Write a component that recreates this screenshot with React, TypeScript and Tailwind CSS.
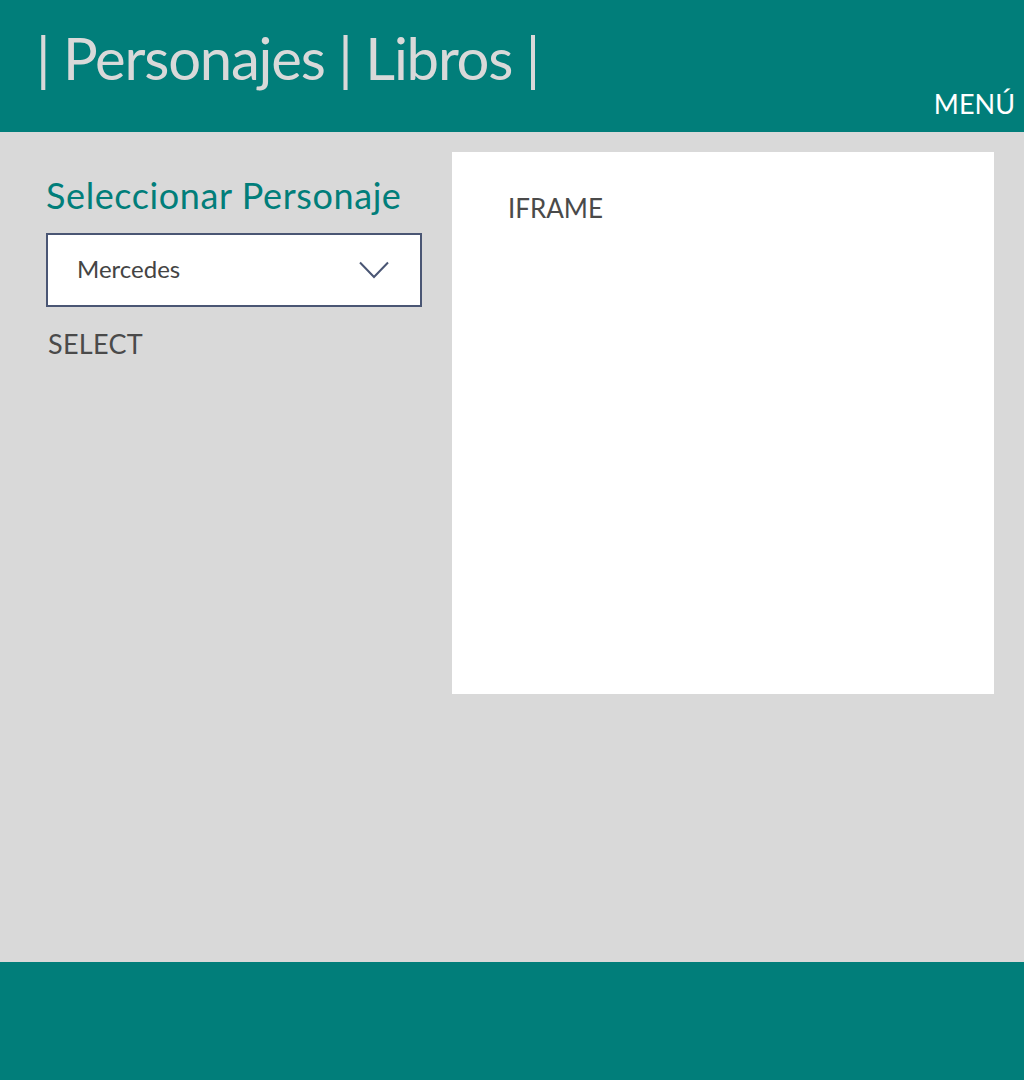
import React from "react";

export default function App() {
  return (
    <div className="flex h-[1080px] w-[1024px] flex-col bg-[#d9d9d9]" style={{ fontFamily: "Lato, 'Open Sans', sans-serif" }}>
      <header className="relative h-[132px] shrink-0 bg-[#017e7a]">
        <h1 className="absolute left-[36px] top-[22px] text-[58px] leading-[72px] font-normal tracking-[-1.2px] text-[#d9d9d9] whitespace-nowrap">
          | Personajes | Libros |
        </h1>
        <div className="absolute right-[9px] top-[86px] text-[27px] leading-[36px] text-white">MENÚ</div>
      </header>
      <main className="flex flex-1 gap-[30px] pl-[46px] pr-[30px] pt-[20px]">
        <div className="w-[376px] shrink-0 pt-[21px]">
          <h2 className="text-[36px] leading-[44px] tracking-[0.6px] text-[#017e7a] whitespace-nowrap">Seleccionar Personaje</h2>
          <div className="mt-[16px] flex h-[74px] items-center justify-between border-2 border-[#4a5674] bg-white pl-[29px] pr-[31px]">
            <span className="text-[24px] leading-[30px] -mt-[2px] text-[#444444]">Mercedes</span>
            <svg width="30" height="18" viewBox="0 0 30 18" fill="none">
              <path d="M1 1.5 L15 16 L29 1.5" stroke="#4a5674" strokeWidth="2" />
            </svg>
          </div>
          <div className="mt-[21px] pl-[2px] text-[27px] leading-[32px] tracking-[0.3px] text-[#4a4a4a]">SELECT</div>
        </div>
        <div className="h-[542px] w-[542px] bg-white pl-[56px] pt-[40px]">
          <div className="text-[26px] leading-[32px] text-[#4a4a4a]">IFRAME</div>
        </div>
      </main>
      <footer className="h-[118px] shrink-0 bg-[#017e7a]" />
    </div>
  );
}
